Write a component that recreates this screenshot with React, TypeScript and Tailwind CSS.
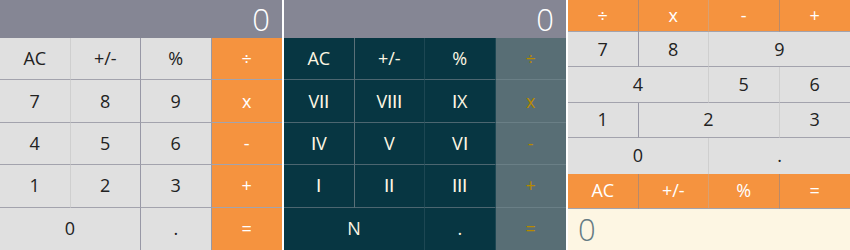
import React from 'react';

type Key = {
  label: string;
  cls: string;
};

const font = { fontFamily: '"Open Sans", "Noto Sans", sans-serif' };

const Btn: React.FC<Key> = ({ label, cls }) => (
  <div className={`flex items-center justify-center text-[18px] ${cls}`}>{label}</div>
);

// classic light calculator
const ClassicCalc: React.FC = () => {
  const g = 'bg-[#e0e0e0] text-[#222]';
  const o = 'bg-[#f5933f] text-white';
  const keys: Key[] = [
    { label: 'AC', cls: `${g} border-r border-b border-r-[#cfcfcf] border-b-[#a3a3ad]` },
    { label: '+/-', cls: `${g} border-r border-b border-r-[#9898a6] border-b-[#a3a3ad]` },
    { label: '%', cls: `${g} border-r border-b border-r-[#9898a6] border-b-[#a3a3ad]` },
    { label: '÷', cls: `${o} border-b border-b-[#a3a3ad]` },
    { label: '7', cls: `${g} border-r border-b border-r-[#cfcfcf] border-b-[#a3a3ad]` },
    { label: '8', cls: `${g} border-r border-b border-r-[#9898a6] border-b-[#a3a3ad]` },
    { label: '9', cls: `${g} border-r border-b border-r-[#9898a6] border-b-[#a3a3ad]` },
    { label: 'x', cls: `${o} border-b border-b-[#a3a3ad]` },
    { label: '4', cls: `${g} border-r border-b border-r-[#cfcfcf] border-b-[#a3a3ad]` },
    { label: '5', cls: `${g} border-r border-b border-r-[#9898a6] border-b-[#a3a3ad]` },
    { label: '6', cls: `${g} border-r border-b border-r-[#9898a6] border-b-[#a3a3ad]` },
    { label: '-', cls: `${o} border-b border-b-[#a3a3ad]` },
    { label: '1', cls: `${g} border-r border-b border-r-[#cfcfcf] border-b-[#a3a3ad]` },
    { label: '2', cls: `${g} border-r border-b border-r-[#9898a6] border-b-[#a3a3ad]` },
    { label: '3', cls: `${g} border-r border-b border-r-[#9898a6] border-b-[#a3a3ad]` },
    { label: '+', cls: `${o} border-b border-b-[#a3a3ad]` },
    { label: '0', cls: `${g} col-span-2 border-r border-r-[#9898a6]` },
    { label: '.', cls: `${g} border-r border-r-[#9898a6]` },
    { label: '=', cls: o },
  ];
  return (
    <div className="grid h-[250px] grid-cols-4 grid-rows-[38px_repeat(5,minmax(0,1fr))]">
      <div className="col-span-4 flex items-center justify-end bg-[#858694] pr-3 text-[31px] leading-tight font-light text-white">
        0
      </div>
      {keys.map((k, i) => (
        <Btn key={i} {...k} />
      ))}
    </div>
  );
};

// roman numeral calculator, solarized dark
// the "I" strokes use U+2160 so they keep their serifs like in the original
const RomanCalc: React.FC = () => {
  const t = 'bg-[#073642] text-[#fdf6e3]';
  const o = 'bg-[#586e75] text-[#b58900]';
  const hb = 'border-b border-b-[#4c6670]';
  const keys: Key[] = [
    { label: 'AC', cls: `${t} border-r ${hb} border-r-[#5a7078]` },
    { label: '+/-', cls: `${t} border-r ${hb} border-r-[#1d4753]` },
    { label: '%', cls: `${t} border-r ${hb} border-r-[#1d4753]` },
    { label: '÷', cls: `${o} border-b border-b-[#6a7f86]` },
    { label: 'VⅠⅠ', cls: `${t} border-r ${hb} border-r-[#5a7078]` },
    { label: 'VⅠⅠⅠ', cls: `${t} border-r ${hb} border-r-[#1d4753]` },
    { label: 'ⅠX', cls: `${t} border-r ${hb} border-r-[#1d4753]` },
    { label: 'x', cls: `${o} border-b border-b-[#6a7f86]` },
    { label: 'ⅠV', cls: `${t} border-r ${hb} border-r-[#5a7078]` },
    { label: 'V', cls: `${t} border-r ${hb} border-r-[#1d4753]` },
    { label: 'VⅠ', cls: `${t} border-r ${hb} border-r-[#1d4753]` },
    { label: '-', cls: `${o} border-b border-b-[#6a7f86]` },
    { label: 'Ⅰ', cls: `${t} border-r ${hb} border-r-[#5a7078]` },
    { label: 'ⅠⅠ', cls: `${t} border-r ${hb} border-r-[#1d4753]` },
    { label: 'ⅠⅠⅠ', cls: `${t} border-r ${hb} border-r-[#1d4753]` },
    { label: '+', cls: `${o} border-b border-b-[#6a7f86]` },
    { label: 'N', cls: `${t} col-span-2 border-r border-r-[#1d4753]` },
    { label: '.', cls: `${t} border-r border-r-[#1d4753]` },
    { label: '=', cls: o },
  ];
  return (
    <div className="grid h-[250px] grid-cols-4 grid-rows-[38px_repeat(5,minmax(0,1fr))]">
      <div className="col-span-4 flex items-center justify-end bg-[#858694] pr-3 text-[31px] leading-tight font-light text-white">
        0
      </div>
      {keys.map((k, i) => (
        <Btn key={i} {...k} />
      ))}
    </div>
  );
};

// upside-down layout, display at the bottom
const FlippedCalc: React.FC = () => {
  const g = 'bg-[#e0e0e0] text-[#222]';
  const o = 'bg-[#f5933f] text-white';
  const hb = 'border-b border-b-[#a3a3ad]';
  const keys: Key[] = [
    { label: '÷', cls: `${o} border-r ${hb} border-r-[#b98a6a]` },
    { label: 'x', cls: `${o} border-r ${hb} border-r-[#d9a070]` },
    { label: '-', cls: `${o} border-r ${hb} border-r-[#b98a6a]` },
    { label: '+', cls: `${o} ${hb}` },
    { label: '7', cls: `${g} border-r ${hb} border-r-[#9898a6]` },
    { label: '8', cls: `${g} border-r ${hb} border-r-[#cfcfcf]` },
    { label: '9', cls: `${g} col-span-2 ${hb}` },
    { label: '4', cls: `${g} col-span-2 border-r ${hb} border-r-[#cfcfcf]` },
    { label: '5', cls: `${g} border-r ${hb} border-r-[#cfcfcf]` },
    { label: '6', cls: `${g} ${hb}` },
    { label: '1', cls: `${g} border-r ${hb} border-r-[#9898a6]` },
    { label: '2', cls: `${g} col-span-2 border-r ${hb} border-r-[#cfcfcf]` },
    { label: '3', cls: `${g} ${hb}` },
    { label: '0', cls: `${g} col-span-2 border-r border-r-[#cfcfcf]` },
    { label: '.', cls: `${g} col-span-2` },
    { label: 'AC', cls: `${o} border-r ${hb} border-r-[#b98a6a]` },
    { label: '+/-', cls: `${o} border-r ${hb} border-r-[#d9a070]` },
    { label: '%', cls: `${o} border-r ${hb} border-r-[#b98a6a]` },
    { label: '=', cls: `${o} ${hb}` },
  ];
  return (
    <div className="grid h-[250px] grid-cols-4 grid-rows-[32px_repeat(5,minmax(0,1fr))_41px]">
      {keys.map((k, i) => (
        <Btn key={i} {...k} />
      ))}
      <div className="col-span-4 flex items-center bg-[#fdf6e3] pl-[10px] text-[31px] leading-tight font-light text-[#657b83]">
        0
      </div>
    </div>
  );
};

export default function App() {
  return (
    <div className="grid h-[250px] w-[850px] grid-cols-3 gap-[2px] bg-white" style={font}>
      <ClassicCalc />
      <RomanCalc />
      <FlippedCalc />
    </div>
  );
}
